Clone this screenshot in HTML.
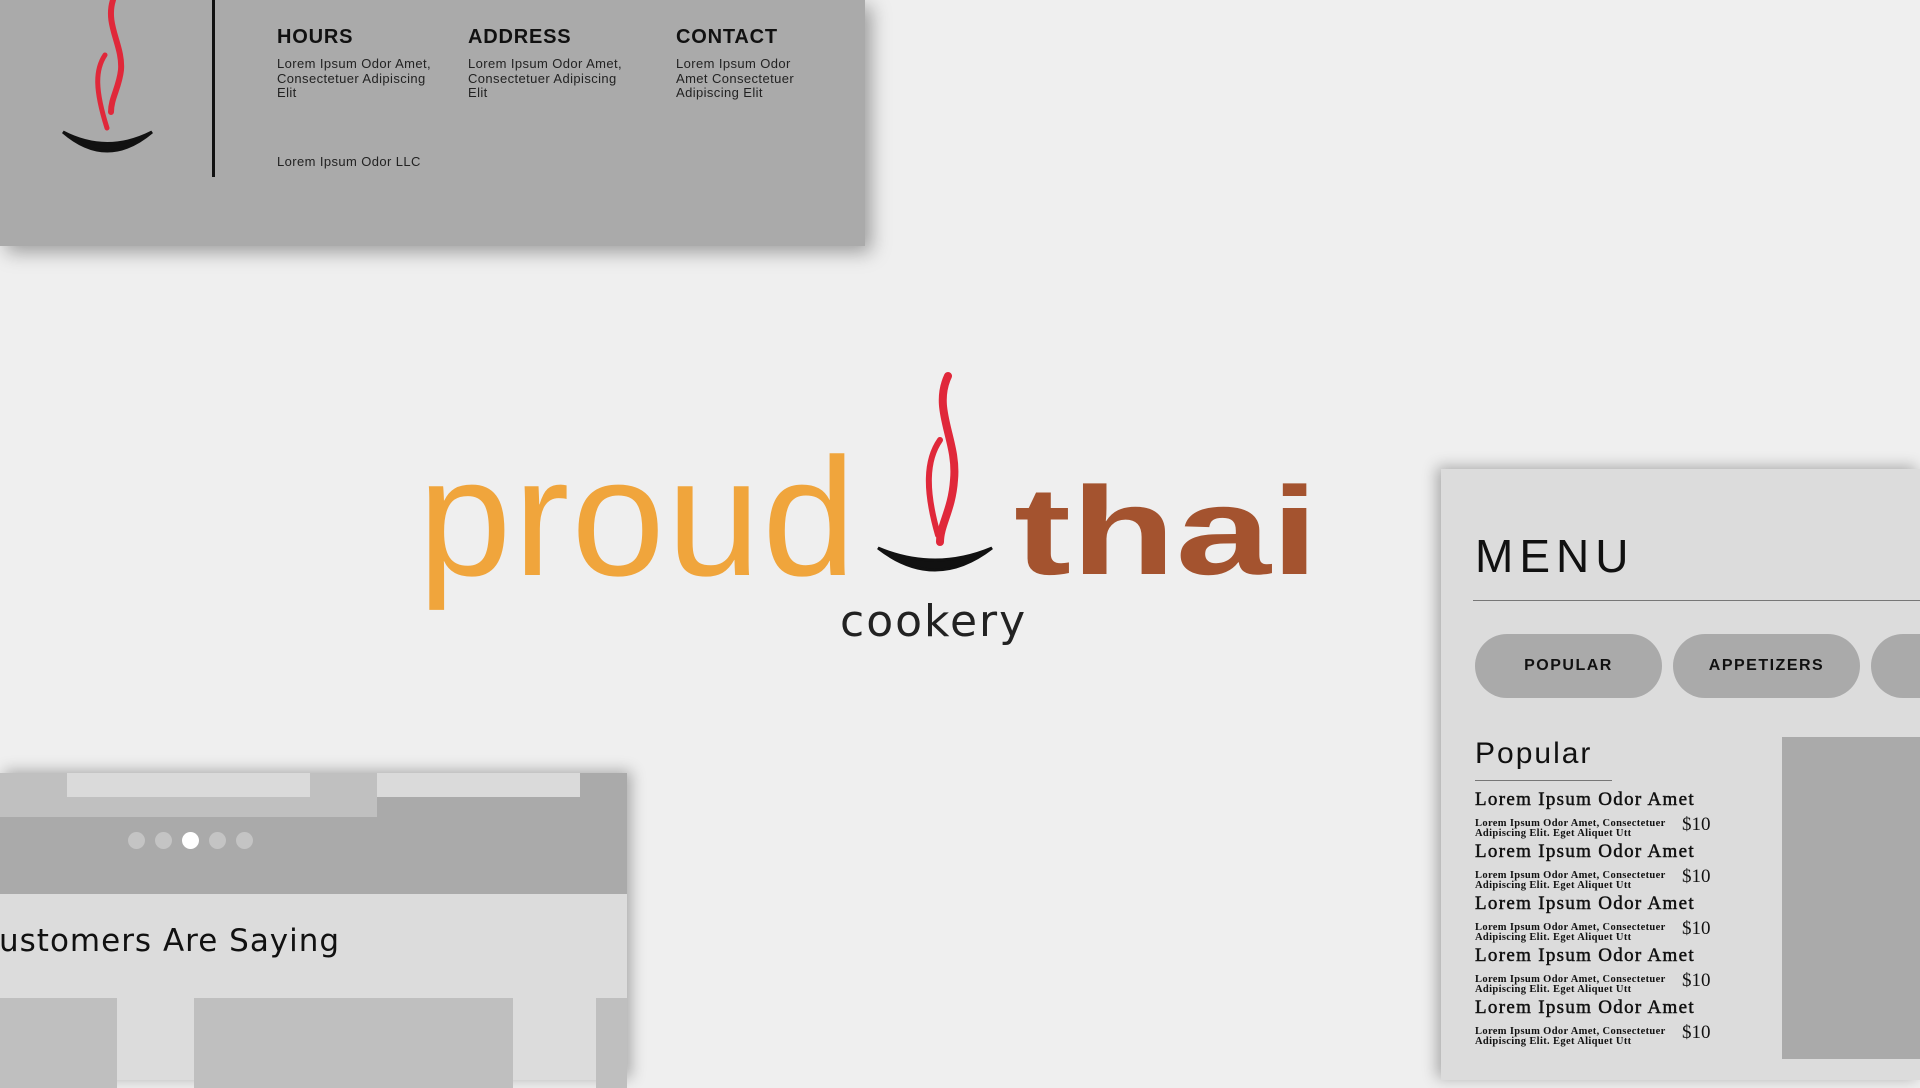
<!DOCTYPE html>
<html><head><meta charset="utf-8"><style>
*{margin:0;padding:0;box-sizing:border-box}
body{width:1920px;height:1080px;background:#efefef;position:relative;overflow:hidden;font-family:"Liberation Sans",sans-serif}
.a{position:absolute}
.top{left:0;top:0;width:865px;height:246px;background:#aaa;box-shadow:6px 6px 18px rgba(0,0,0,.35)}
.h{font-weight:bold;font-size:20px;color:#111;letter-spacing:.8px}
.t{font-size:13px;line-height:14.5px;color:#222;letter-spacing:.4px}
.menu{left:1441px;top:469px;width:479px;height:611px;background:#dcdcdc;box-shadow:-4px -2px 14px rgba(0,0,0,.3)}
.btn{top:165px;height:64px;width:187px;border-radius:32px;background:#aaa;font-weight:bold;font-size:16px;letter-spacing:1.5px;text-align:center;line-height:64px;color:#111}
.it{font-family:"Liberation Serif",serif;color:#111;position:absolute;left:34px;font-weight:bold}
.ti{font-size:19px;letter-spacing:1.3px;font-weight:normal;-webkit-text-stroke:.5px #111}
.de{font-size:10.5px;line-height:10px;letter-spacing:.35px}
.pr{left:241px;font-size:19px;font-weight:normal}
.bl{left:0;top:773px;width:627px;height:307px;background:#dcdcdc;box-shadow:4px -2px 14px rgba(0,0,0,.3)}
.dot{width:17px;height:17px;border-radius:50%;background:#c4c4c4;top:59px}
</style></head><body>

<div class="a top">
  <svg class="a" style="left:55px;top:0" width="110" height="155" viewBox="0 0 110 155">
    <path d="M58 0 C50 25,68 45,66 70 C64 88,56 98,56 112" stroke="#e0283a" stroke-width="6" fill="none" stroke-linecap="round"/>
    <path d="M50 55 C40 70,40 90,52 128" stroke="#e0283a" stroke-width="5" fill="none" stroke-linecap="round"/>
    <path d="M8 132 Q52 170 97 132 Q52 155 8 132Z" fill="#111" stroke="#111" stroke-width="3"/>
  </svg>
  <div class="a" style="left:212px;top:0;width:3px;height:177px;background:#111"></div>
  <div class="a h" style="left:277px;top:26px">HOURS</div>
  <div class="a t" style="left:277px;top:57px">Lorem Ipsum Odor Amet,<br>Consectetuer Adipiscing<br>Elit</div>
  <div class="a h" style="left:468px;top:26px">ADDRESS</div>
  <div class="a t" style="left:468px;top:57px">Lorem Ipsum Odor Amet,<br>Consectetuer Adipiscing<br>Elit</div>
  <div class="a h" style="left:676px;top:26px">CONTACT</div>
  <div class="a t" style="left:676px;top:57px">Lorem Ipsum Odor<br>Amet Consectetuer<br>Adipiscing Elit</div>
  <div class="a t" style="left:277px;top:155px">Lorem Ipsum Odor LLC</div>
</div>

<!-- logo -->
<div class="a" style="left:418px;top:433px;font-size:168px;line-height:168px;color:#f0a53c;letter-spacing:2px">proud</div>
<div class="a" style="left:1014px;top:469px;font-size:125px;line-height:125px;font-weight:bold;color:#a4532f;transform:scaleX(1.37);transform-origin:0 0">thai</div>
<svg class="a" style="left:870px;top:370px" width="130" height="210" viewBox="0 0 130 210">
  <path d="M78 6 C62 40,88 70,84 110 C82 140,70 155,70 172" stroke="#e0283a" stroke-width="8" fill="none" stroke-linecap="round"/>
  <path d="M70 70 C56 90,55 120,68 165" stroke="#e0283a" stroke-width="6" fill="none" stroke-linecap="round"/>
  <path d="M8 178 Q65 222 122 178 Q65 202 8 178Z" fill="#111" stroke="#111" stroke-width="3"/>
</svg>
<div class="a" style="left:840px;top:596px;font-size:44px;color:#222;letter-spacing:2px;font-family:'DejaVu Sans',sans-serif">cookery</div>

<div class="a menu">
  <div class="a" style="left:34px;top:60px;font-size:46px;letter-spacing:6px;color:#111">MENU</div>
  <div class="a" style="left:32px;top:131px;width:460px;height:1px;background:#777"></div>
  <div class="a btn" style="left:34px">POPULAR</div>
  <div class="a btn" style="left:232px">APPETIZERS</div>
  <div class="a btn" style="left:430px"></div>
  <div class="a" style="left:34px;top:268px;font-size:30px;letter-spacing:2px;color:#111">Popular</div>
  <div class="a" style="left:34px;top:311px;width:137px;height:1px;background:#777"></div>
  <div class="a" style="left:341px;top:268px;width:140px;height:322px;background:#aaa"></div>
  <div class="it ti" style="top:320px">Lorem Ipsum Odor Amet</div>
  <div class="it de" style="top:350px">Lorem Ipsum Odor Amet, Consectetuer<br>Adipiscing Elit. Eget Aliquet Utt</div>
  <div class="it pr" style="top:345px">$10</div>
  <div class="it ti" style="top:372px">Lorem Ipsum Odor Amet</div>
  <div class="it de" style="top:402px">Lorem Ipsum Odor Amet, Consectetuer<br>Adipiscing Elit. Eget Aliquet Utt</div>
  <div class="it pr" style="top:397px">$10</div>
  <div class="it ti" style="top:424px">Lorem Ipsum Odor Amet</div>
  <div class="it de" style="top:454px">Lorem Ipsum Odor Amet, Consectetuer<br>Adipiscing Elit. Eget Aliquet Utt</div>
  <div class="it pr" style="top:449px">$10</div>
  <div class="it ti" style="top:476px">Lorem Ipsum Odor Amet</div>
  <div class="it de" style="top:506px">Lorem Ipsum Odor Amet, Consectetuer<br>Adipiscing Elit. Eget Aliquet Utt</div>
  <div class="it pr" style="top:501px">$10</div>
  <div class="it ti" style="top:528px">Lorem Ipsum Odor Amet</div>
  <div class="it de" style="top:558px">Lorem Ipsum Odor Amet, Consectetuer<br>Adipiscing Elit. Eget Aliquet Utt</div>
  <div class="it pr" style="top:553px">$10</div>
</div>

<div class="a bl">
  <div class="a" style="left:0;top:0;width:627px;height:121px;background:#aaa"></div>
  <div class="a" style="left:0;top:0;width:377px;height:44px;background:#c0c0c0"></div>
  <div class="a" style="left:67px;top:0;width:243px;height:24px;background:#dadada"></div>
  <div class="a" style="left:377px;top:0;width:203px;height:24px;background:#dadada"></div>
  <div class="a dot" style="left:128px"></div>
  <div class="a dot" style="left:155px"></div>
  <div class="a dot" style="left:182px;background:#fff"></div>
  <div class="a dot" style="left:209px"></div>
  <div class="a dot" style="left:236px"></div>
  <div class="a" style="left:-1px;top:150px;font-size:31px;letter-spacing:1px;color:#111;font-family:'DejaVu Sans',sans-serif">ustomers Are Saying</div>
  <div class="a" style="left:0;top:225px;width:117px;height:90px;background:#bfbfbf"></div>
  <div class="a" style="left:194px;top:225px;width:319px;height:90px;background:#bfbfbf"></div>
  <div class="a" style="left:596px;top:225px;width:31px;height:90px;background:#bfbfbf"></div>
</div>
</body></html>
